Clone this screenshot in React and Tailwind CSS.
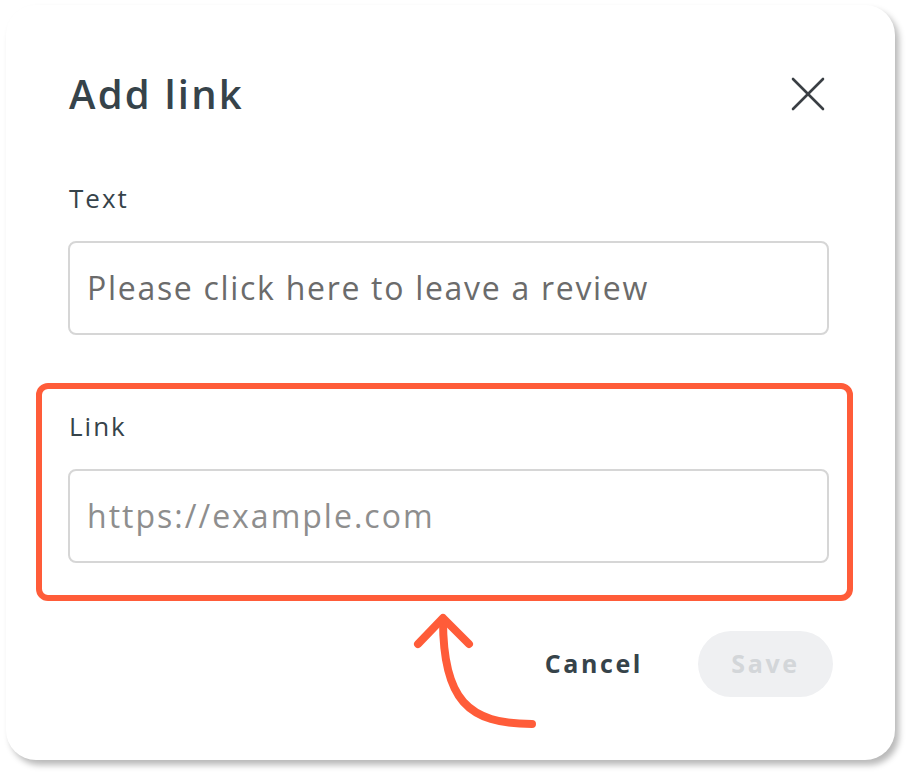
import React from "react";

function CloseIcon() {
  return (
    <svg width="34" height="34" viewBox="0 0 34 34" fill="none" stroke="#3a3f44" strokeWidth="2.6" strokeLinecap="round">
      <path d="M2 2 L32 32" />
      <path d="M32 2 L2 32" />
    </svg>
  );
}

function CurvedArrow() {
  return (
    <svg
      className="absolute left-[408px] top-[606px]"
      width="140"
      height="130"
      viewBox="408 606 140 130"
      fill="none"
      stroke="#ff5c39"
      strokeWidth="8"
      strokeLinecap="round"
      strokeLinejoin="round"
    >
      <path d="M443 620 C443 700 468 724 532 724" />
      <path d="M418 644 L443 618 L469 644" />
    </svg>
  );
}

export default function App() {
  const font = { fontFamily: '"Open Sans", "Liberation Sans", sans-serif' };

  return (
    <div className="relative w-[909px] h-[775px] bg-white" style={font}>
      <div className="absolute left-[6px] top-[5px] w-[889px] h-[755px] rounded-[30px] bg-white shadow-[4px_5px_6px_rgba(0,0,0,0.28)] pl-[62px] pr-[66px] pt-[67px] pb-[63px] flex flex-col">
        <div className="flex items-center justify-between h-[44px]">
          <h1 className="text-[40px] leading-[44px] font-semibold tracking-[2.2px] text-[#36434a] ml-[1px]">Add link</h1>
          <div className="mr-[4px]">
            <CloseIcon />
          </div>
        </div>

        <label className="mt-[67px] text-[26px] leading-[30px] font-medium tracking-[2px] text-[#36434a] ml-[1px]">Text</label>
        <div className="mt-[28px] h-[94px] rounded-[8px] border-2 border-[#d6d6d6] flex items-center px-[17px]">
          <span className="text-[32px] tracking-[1.7px] text-[#6b6b6b] whitespace-nowrap">Please click here to leave a review</span>
        </div>

        <div className="mt-[48px] -ml-[32px] -mr-[24px] border-[6px] border-[#ff5c39] rounded-[12px] pl-[26px] pr-[18px] pt-[22px] pb-[32px] flex flex-col">
          <label className="text-[26px] leading-[30px] font-medium tracking-[2px] text-[#36434a] ml-[1px]">Link</label>
          <div className="mt-[28px] h-[94px] rounded-[8px] border-2 border-[#d6d6d6] flex items-center px-[17px]">
            <span className="text-[32px] tracking-[2px] text-[#8e8e8e] whitespace-nowrap">https://example.com</span>
          </div>
        </div>

        <div className="mt-[30px] -mr-[4px] flex items-center justify-end">
          <button className="text-[25px] font-bold tracking-[2.6px] text-[#36434a] mr-[55px]">Cancel</button>
          <button className="w-[135px] h-[66px] rounded-full bg-[#eff0f2] text-[25px] font-bold tracking-[2.6px] text-[#d3d6d9]">Save</button>
        </div>
      </div>
      <CurvedArrow />
    </div>
  );
}
